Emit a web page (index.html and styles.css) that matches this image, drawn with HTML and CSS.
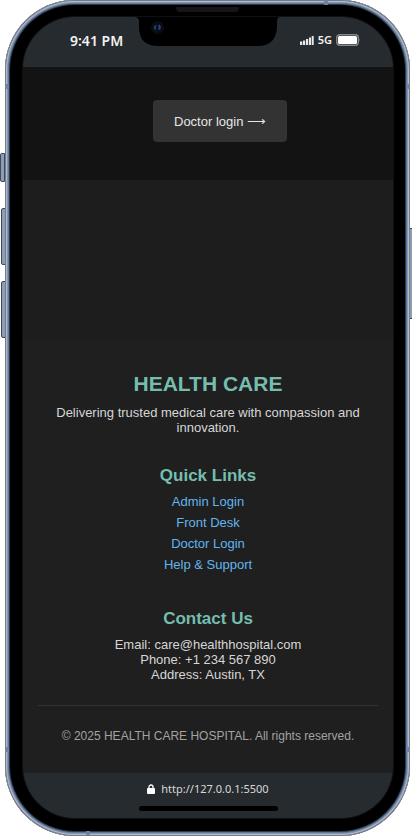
FILE: index.html
```html
<!DOCTYPE html>
<html lang="en">
<head>
<meta charset="utf-8">
<meta name="viewport" content="width=device-width, initial-scale=1">
<title>Health Care Hospital</title>
<link rel="stylesheet" href="styles.css">
</head>
<body>
<div class="device">
  <span class="key key-silent"></span>
  <span class="key key-up"></span>
  <span class="key key-down"></span>
  <span class="key key-power"></span>
  <span class="seam seam-top"></span>
  <span class="seam seam-bottom"></span>
  <span class="seam seam-left-high"></span>
  <span class="seam seam-left-low"></span>
  <span class="seam seam-right-high"></span>
  <span class="seam seam-right-low"></span>
  <div class="bezel">
    <span class="speaker"></span>
    <svg class="notch" width="147" height="30" viewBox="0 0 147 30" aria-hidden="true">
      <path d="M0 0H147Q143 0 143 4V10Q142 29 124 29H24Q5 29 5 10V4Q5 0 0 0Z" fill="#000"/>
      <circle cx="23.500" cy="10.500" r="6.500" fill="#0b0c10"/>
      <circle cx="23.500" cy="10.500" r="4" fill="#07101a"/>
      <path d="M22 8.500Q20 10 21.500 12.500" stroke="#1d5262" stroke-width="1.500" fill="none"/>
      <path d="M25 8Q26.500 10.500 25 12.500" stroke="#2a3f96" stroke-width="2" fill="none"/>
    </svg>
    <div class="screen">
      <header class="status">
        <span class="time">9:41 PM</span>
        <span class="signals">
          <svg width="14" height="9" viewBox="0 0 14 9" aria-hidden="true"><path d="M0 5.500h2.300v3.500H0zM3 4.500h2.200v4.500H3zM6 3h2.200V9H6zM9 1.500h2v7.500H9zM11.700 0H13.700v9h-2z" fill="#e8e8e8"/></svg>
          <span class="network">5G</span>
          <svg width="24" height="12" viewBox="0 0 24 12" aria-hidden="true"><rect x=".7" y=".7" width="21.600" height="10.600" rx="3" fill="#262b2f" stroke="#83888b" stroke-width="1.400"/><rect x="2" y="2" width="19" height="8" rx="1.500" fill="#fff"/><path d="M22.800 4Q24.300 6 22.800 8Z" fill="#83888b"/></svg>
        </span>
      </header>
      <main>
        <section class="login">
          <button class="login-button" type="button">Doctor login ⟶</button>
        </section>
        <section class="spacer"></section>
      </main>
      <footer class="footer">
        <section class="brand">
          <h2>HEALTH CARE</h2>
          <p>Delivering trusted medical care with compassion and innovation.</p>
        </section>
        <nav class="links">
          <h3>Quick Links</h3>
          <ul>
            <li><a href="#admin">Admin Login</a></li>
            <li><a href="#desk">Front Desk</a></li>
            <li><a href="#doctor">Doctor Login</a></li>
            <li><a href="#help">Help &amp; Support</a></li>
          </ul>
        </nav>
        <section class="contact">
          <h3>Contact Us</h3>
          <p>Email: care@healthhospital.com</p>
          <p>Phone: +1 234 567 890</p>
          <p>Address: Austin, TX</p>
        </section>
        <p class="copyright">© 2025 HEALTH CARE HOSPITAL. All rights reserved.</p>
      </footer>
      <div class="address">
        <div class="url">
          <svg width="8" height="10" viewBox="0 0 8 10" aria-hidden="true"><rect y="4" width="8" height="6" rx="1" fill="#fff"/><path d="M2 5V3a2 2 0 0 1 4 0v2" fill="none" stroke="#fff" stroke-width="1.300"/></svg>
          <span>http://127.0.0.1:5500</span>
        </div>
        <span class="home"></span>
      </div>
    </div>
  </div>
</div>
</body>
</html>
```
FILE: styles.css
```css
* { box-sizing: border-box; }

body {
  margin: 0;
  background: #fff;
  font: 13px/15px "Liberation Sans", Arial, sans-serif;
  color: #d6d6d6;
}

h2, h3, p, ul { margin: 0; padding: 0; }
svg { display: block; }

.device {
  position: relative;
  display: flex;
  min-height: 100vh;
  margin: 0 2px 0 5px;
}

.bezel {
  position: relative;
  flex: 1;
  display: flex;
  padding: 17px 17px 18px 18px;
  border-radius: 70px;
  background: #000;
  box-shadow:
    inset 0 0 0 1px #747b88,
    inset 0 0 0 2px #b4bac9,
    inset 0 0 0 3px #8595b0,
    inset 0 0 0 4px #5d7898,
    inset 0 0 0 5px #2c3b50;
}

.screen {
  flex: 1;
  display: flex;
  flex-direction: column;
  overflow: hidden;
  border-radius: 52px;
  background: #1f1f1f;
  box-shadow: 0 0 0 1px #101014;
}

.key {
  position: absolute;
  width: 5px;
  background: #8d9db6;
  border: 1px solid #3f4a5c;
}
.key-silent { left: -5px; top: 153px; height: 29px; border-radius: 2px 0 0 2px; }
.key-up { left: -4px; top: 208px; height: 57px; border-radius: 2px 0 0 2px; }
.key-down { left: -4px; top: 281px; height: 57px; border-radius: 2px 0 0 2px; }
.key-power { right: -4px; top: 228px; height: 91px; border-radius: 0 2px 2px 0; }

.seam { position: absolute; z-index: 1; width: 4px; height: 5px; background: #7280a3; }
.seam-top { right: 82px; top: 0; }
.seam-bottom { left: 81px; bottom: 0; }
.seam-left-high { left: 0; top: 84px; }
.seam-left-low { left: 0; bottom: 84px; }
.seam-right-high { right: 0; top: 84px; }
.seam-right-low { right: 0; bottom: 84px; }

.speaker {
  position: absolute;
  top: 7px;
  left: 0;
  right: 0;
  width: 63px;
  height: 5px;
  margin: 0 auto;
  border-radius: 0 0 4px 4px;
  background: #161616;
}

.notch {
  position: absolute;
  top: 17px;
  left: 0;
  right: 0;
  margin: 0 auto;
}

.status {
  display: flex;
  justify-content: space-between;
  height: 50px;
  padding: 14px 33px 0 47px;
  background: #262b2f;
  color: #f2f2f2;
  font-family: "Noto Sans", sans-serif;
  font-weight: 600;
  line-height: 20px;
}
.time { font-size: 14px; }
.signals { display: flex; align-items: center; gap: 4px; height: 18px; }
.network { font-size: 11px; }

.login {
  display: flex;
  justify-content: center;
  padding: 33px 0 38px 24px;
  background: #131313;
}
.login-button {
  height: 42px;
  padding: 0 21px;
  border: 0;
  border-radius: 4px;
  background: #333;
  color: #e6e6e6;
  font: inherit;
}
.spacer { height: 161px; background: #1d1d1d; }

.footer {
  flex: 1;
  padding: 31px 15px 28px;
  text-align: center;
}
h2, h3 { color: #76bdb0; font-weight: 700; }
h2 { font-size: 21px; line-height: 24px; margin-bottom: 9px; }
h3 { font-size: 17px; line-height: 20px; }

.links { margin-top: 31px; }
.links ul { list-style: none; padding-top: 5px; }
.links li { line-height: 21px; }
.links a { color: #62b5ee; text-decoration: none; }

.contact { margin-top: 34px; }
.contact h3 { margin-bottom: 8px; }

.copyright {
  margin-top: 23px;
  padding-top: 23px;
  border-top: 1px solid #333;
  color: #a3a3a3;
  font-size: 12px;
}

.address {
  height: 45px;
  padding-top: 8px;
  background: #262b2f;
  color: #d8d8d8;
  font: 11px/16px "Noto Sans", sans-serif;
}
.url { display: flex; justify-content: center; align-items: center; gap: 6px; }
.home {
  display: block;
  width: 139px;
  height: 5px;
  margin: 9px auto 0;
  border-radius: 3px;
  background: #000;
}
```
